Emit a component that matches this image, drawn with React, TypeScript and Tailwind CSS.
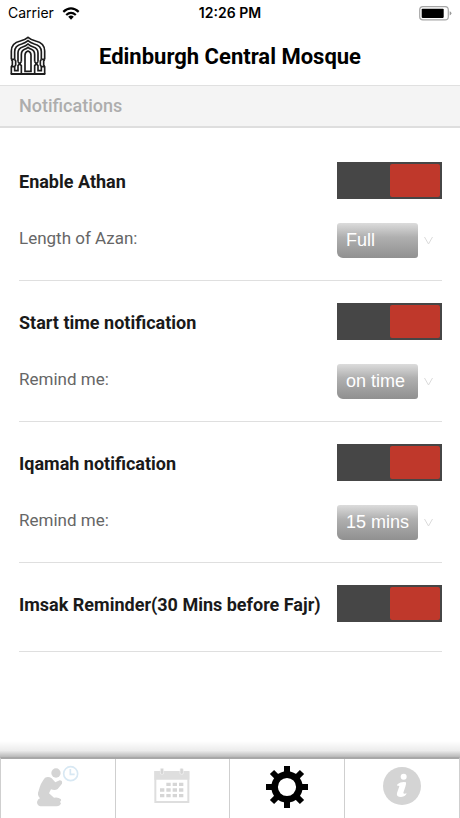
import React, { useState } from "react";

interface ToggleProps {
  id: string;
  checked: boolean;
  onChange: (checked: boolean) => void;
}

const Toggle: React.FC<ToggleProps> = ({ id, checked, onChange }) => (
  <span className="relative flex h-[37px] w-[105px] shrink-0 bg-[#464646] p-[2px]">
    <input
      id={id}
      type="checkbox"
      checked={checked}
      onChange={(e) => onChange(e.target.checked)}
      className="peer absolute inset-0 h-full w-full cursor-pointer appearance-none"
    />
    <span className="pointer-events-none h-full w-[50px] rounded-[2px] bg-[#8a8a8a] peer-checked:ml-auto peer-checked:bg-[#bf382b]" />
  </span>
);

interface SettingProps {
  id: string;
  title: string;
  option?: string;
  choices?: string[];
}

const Setting: React.FC<SettingProps> = ({ id, title, option, choices }) => {
  const [enabled, setEnabled] = useState(true);

  return (
    <section
      className={`border-b border-[#dfdfdf] pt-[22px] ${choices ? "pb-[22px]" : "pb-[29px]"}`}
    >
      <div className="flex items-center justify-between">
        <label htmlFor={id} className="pt-[2px] text-[18px] leading-6 font-bold whitespace-nowrap text-[#1a1a1a]">
          {title}
        </label>
        <Toggle id={id} checked={enabled} onChange={setEnabled} />
      </div>
      {choices && (
        <div className="mt-6 flex items-center">
          <label htmlFor={`${id}-option`} className="flex-1 pb-[6px] text-[17px] leading-6 text-[#666]">
            {option}
          </label>
          <div className="flex w-[105px] items-center gap-[6px]">
            <select
              id={`${id}-option`}
              className="h-[35px] w-[81px] appearance-none rounded-[3px] rounded-bl-[6px] bg-linear-to-b from-[#dcdcdc] via-[#b0b0b0] via-40% to-[#909090] pl-[9px] font-['Liberation_Sans',Arial,sans-serif] text-[18px] text-white"
            >
              {choices.map((choice) => (
                <option key={choice}>{choice}</option>
              ))}
            </select>
            <svg width="9" height="9" viewBox="0 0 9 9" fill="none" stroke="#dadada" aria-hidden="true">
              <path d="M0.5 1 L4.5 8 L8.5 1" />
            </svg>
          </div>
        </div>
      )}
    </section>
  );
};

const Logo = () => (
  <svg width="36" height="40" viewBox="31 107 108 120" fill="none" stroke="#1c1c1c" strokeWidth="5" aria-hidden="true">
    <path d="M35 177V152Q35 128 62 122Q77 118 85 111Q93 118 108 122Q135 128 135 152V177" />
    <path d="M45 177V154Q45 136 66 131Q78 127 85 121Q92 127 104 131Q125 136 125 154V177" />
    <path d="M55 184V158Q55 144 69 140Q79 137 85 131Q91 137 101 140Q115 144 115 158V184" />
    <path d="M65 184V163Q65 151 75 147Q81 145 85 141Q89 145 95 147Q105 151 105 163V184" />
    <path d="M76 213V164Q76 155 85 152Q94 155 94 164V213Z" />
    <path d="M33 221H137" strokeWidth="6" />
    <path d="M35 177L38 182V194L35 199V221M135 177L132 182V194L135 199V221" />
    <path d="M45 177L48 182V194L45 199V211H55V196L60 190L55 184" />
    <path d="M125 177L122 182V194L125 199V211H115V196L110 190L115 184" />
    <path d="M65 184L60 190L65 196V220M105 184L110 190L105 196V220" />
    <path d="M35 177H45M35 199H45M125 177H135M125 199H135" />
  </svg>
);

const WifiIcon = () => (
  <svg width="18" height="13" viewBox="0 0 18 13" fill="none" stroke="#000" strokeWidth="2.3" aria-hidden="true">
    <path d="M1.3 4.8Q9-2 16.7 4.8" />
    <path d="M4.2 8Q9 3.8 13.8 8" />
    <path d="M6.2 9.7Q9 7.5 11.8 9.7L9 12.7Z" fill="#000" stroke="none" />
  </svg>
);

const BatteryIcon = () => (
  <svg width="33" height="15" viewBox="0 0 33 15" aria-hidden="true">
    <rect x="0.7" y="0.7" width="28.6" height="13.2" rx="3.2" fill="none" stroke="#a6a6a6" strokeWidth="1.2" />
    <rect x="2.7" y="2.7" width="22" height="9.2" rx="0.8" />
    <path d="M30.7 5.2Q32.4 5.8 32.4 7.3T30.7 9.4Z" fill="#999" />
  </svg>
);

const PrayerIcon = () => (
  <svg width="44" height="44" viewBox="110 82 132 132" aria-hidden="true">
    <g fill="#d4d4d4">
      <circle cx="170" cy="109" r="14" />
      <path d="M137 123Q148 118 157 125L168 137L181 131Q190 131 188 141L175 157Q167 162 155 158L149 170L164 183Q176 180 185 188Q187 191 182 196L185 200Q182 209 172 209H123Q113 206 113 196Q115 187 122 185Q112 174 118 162Q124 138 137 123Z" />
    </g>
    <g fill="none" stroke="#d8e8f3" strokeWidth="5">
      <circle cx="214" cy="111" r="21" />
      <path d="M213 97V113H226" />
    </g>
  </svg>
);

const CalendarIcon = () => (
  <svg width="36" height="36" viewBox="134 96 108 108" aria-hidden="true">
    <rect x="138" y="108" width="99" height="90" fill="#fff" stroke="#dedede" strokeWidth="6" />
    <path d="M135 106H240V131H135Z" fill="#dedede" />
    <g fill="#d5d5d5" stroke="#f4f4f4" strokeWidth="2">
      <rect x="153" y="97" width="10" height="18" rx="4" />
      <rect x="212" y="97" width="10" height="18" rx="4" />
    </g>
    <path
      d="M171 145H184M190 145H203M209 145H222M152 162H165M171 162H184M190 162H203M209 162H222M152 179H165M171 179H184M190 179H203M209 179H222"
      stroke="#d6d6d6"
      strokeWidth="10"
    />
  </svg>
);

const GearIcon = () => (
  <svg width="44" height="44" viewBox="-22 -23 44 44" fill="none" stroke="#000" aria-hidden="true">
    <circle r="12.4" strokeWidth="6.6" />
    <path
      d="M0-14V-21M0 14V21M-14 0H-21M14 0H21M-10-10L-15-15M10-10L15-15M-10 10L-15 15M10 10L15 15"
      strokeWidth="6"
    />
  </svg>
);

const InfoIcon = () => (
  <svg width="38" height="38" viewBox="126 92 114 114" aria-hidden="true">
    <circle cx="183" cy="149" r="57" fill="#d4d4d4" />
    <circle cx="188" cy="121" r="9" fill="#fff" />
    <path
      d="M169 144Q181 135 195 138Q196 143 193 151L187 169Q187 174 197 171Q195 180 180 182Q165 182 168 170L175 150Q175 147 169 149Z"
      fill="#fff"
    />
  </svg>
);

const tabs = [
  { name: "Prayer times", icon: <PrayerIcon /> },
  { name: "Calendar", icon: <CalendarIcon /> },
  { name: "Settings", icon: <GearIcon /> },
  { name: "Information", icon: <InfoIcon /> },
];

export default function App() {
  return (
    <div className="flex min-h-screen flex-col bg-white font-[Roboto,sans-serif]">
      <div className="grid h-[26px] grid-cols-3 items-center px-2 font-[Inter,sans-serif] text-[14px] leading-5 text-black">
        <div className="flex items-center gap-2">
          <span>Carrier</span>
          <WifiIcon />
        </div>
        <span className="text-center font-semibold">12:26 PM</span>
        <div className="flex justify-end">
          <BatteryIcon />
        </div>
      </div>

      <header className="grid h-[60px] grid-cols-[36px_1fr_36px] items-center border-b border-[#e0e0e0] px-[10px]">
        <Logo />
        <h1 className="pt-[2px] text-center text-[22px] leading-7 font-bold text-black">
          Edinburgh Central Mosque
        </h1>
      </header>

      <h2 className="border-b-2 border-[#dedede] bg-[#f4f4f4] px-[19px] pt-2 pb-2 text-[18px] leading-6 font-medium text-[#adadad]">
        Notifications
      </h2>

      <main className="flex-1 pt-3 pr-[18px] pl-[19px]">
        <Setting id="athan" title="Enable Athan" option="Length of Azan:" choices={["Full", "Short"]} />
        <Setting id="start" title="Start time notification" option="Remind me:" choices={["on time", "5 mins"]} />
        <Setting id="iqamah" title="Iqamah notification" option="Remind me:" choices={["15 mins", "30 mins"]} />
        <Setting id="imsak" title="Imsak Reminder(30 Mins before Fajr)" />
      </main>

      <div className="h-4 bg-linear-to-b from-white via-[#ececec] via-60% to-[#b8b8b8]" />
      <nav className="grid h-[61px] grid-cols-4 divide-x divide-[#cfcfcf] border-x border-t-2 border-x-[#cfcfcf] border-t-[#a8a8a8] bg-white">
        {tabs.map((tab) => (
          <button key={tab.name} type="button" aria-label={tab.name} className="flex items-center justify-center pb-[6px]">
            {tab.icon}
          </button>
        ))}
      </nav>
    </div>
  );
}
